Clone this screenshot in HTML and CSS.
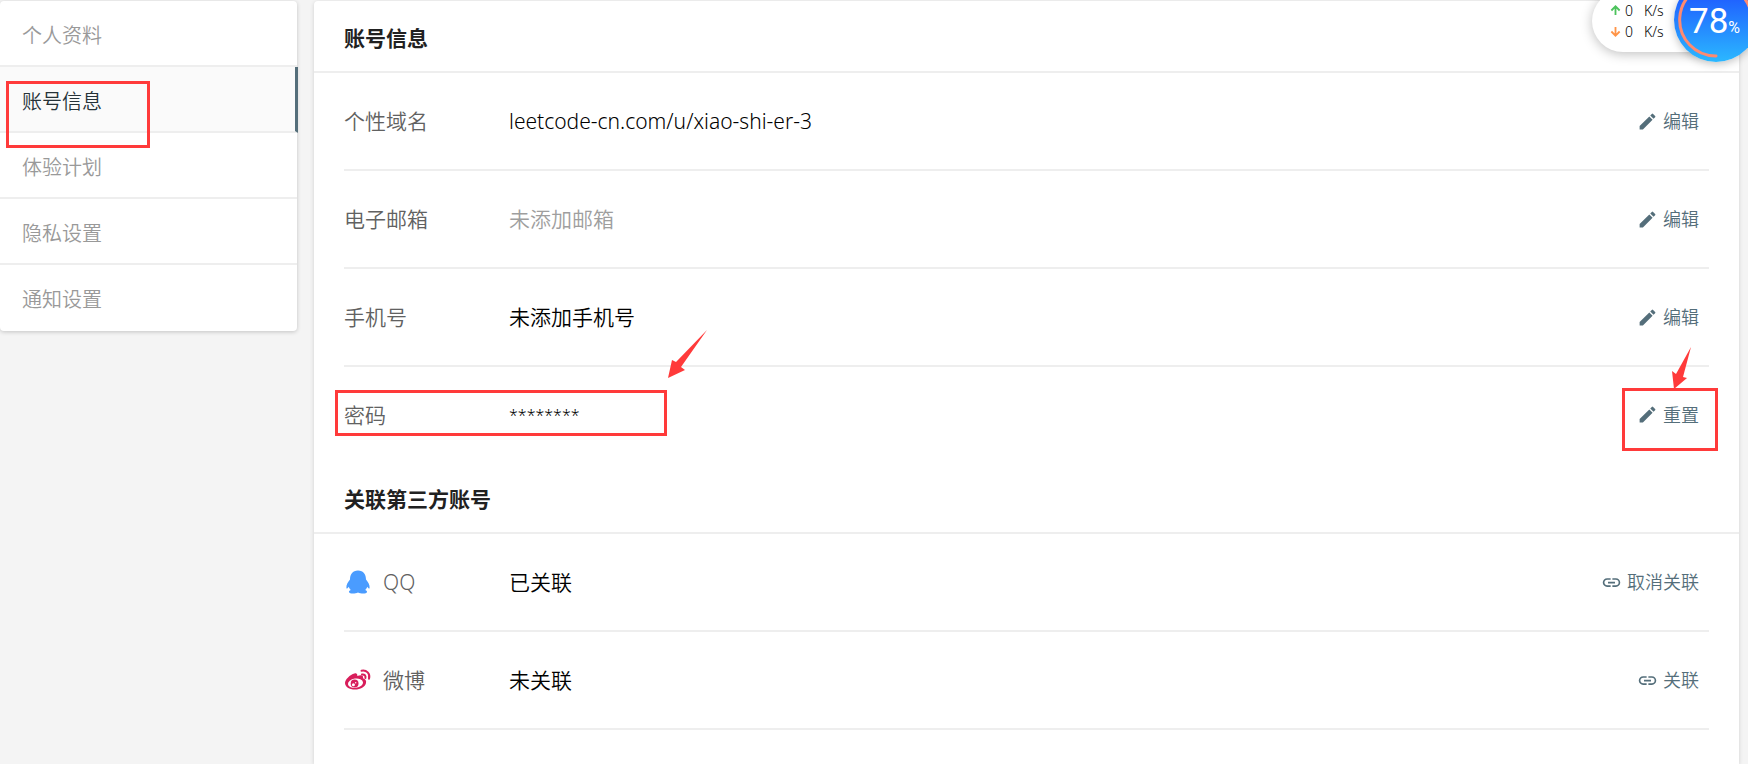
FILE: index.html
```html
<!DOCTYPE html>
<html lang="zh-CN">
<head>
  <meta charset="UTF-8">
  <title>账号信息</title>
  <link rel="stylesheet" href="styles.css">
</head>
<body>
  <!-- shared icons -->
  <svg class="sprite" aria-hidden="true">
    <symbol id="pencil" viewBox="0 0 24 24">
      <path d="M3 17.25V21h3.75L17.81 9.94l-3.75-3.75L3 17.25zM20.71 7.04a1 1 0 0 0 0-1.41l-2.34-2.34a1 1 0 0 0-1.41 0l-1.83 1.83 3.75 3.75 1.83-1.83z"/>
    </symbol>
    <symbol id="link" viewBox="0 0 24 24">
      <path d="M3.9 12c0-1.71 1.39-3.1 3.1-3.1h4V7H7a5 5 0 0 0 0 10h4v-1.9H7c-1.71 0-3.1-1.39-3.1-3.1zM8 13h8v-2H8v2zm9-6h-4v1.900h4a3.100 3.100 0 0 1 0 6.200h-4V17h4a5 5 0 0 0 0-10z"/>
    </symbol>
  </svg>

  <div class="page">
    <nav class="sidebar">
      <a class="menu-item" href="#">个人资料</a>
      <a class="menu-item active" href="#">账号信息</a>
      <a class="menu-item" href="#">体验计划</a>
      <a class="menu-item" href="#">隐私设置</a>
      <a class="menu-item" href="#">通知设置</a>
      <span class="mark mark-menu"></span>
    </nav>

    <main class="panel">
      <h2 class="panel-title">账号信息</h2>
      <div class="rows">
        <div class="row">
          <span class="label">个性域名</span>
          <span class="value">leetcode-cn.com/u/xiao-shi-er-3</span>
          <button type="button" class="action"><svg class="icon"><use href="#pencil"/></svg>编辑</button>
        </div>
        <div class="row">
          <span class="label">电子邮箱</span>
          <span class="value empty">未添加邮箱</span>
          <button type="button" class="action"><svg class="icon"><use href="#pencil"/></svg>编辑</button>
        </div>
        <div class="row">
          <span class="label">手机号</span>
          <span class="value">未添加手机号</span>
          <button type="button" class="action"><svg class="icon"><use href="#pencil"/></svg>编辑</button>
        </div>
        <div class="row last">
          <span class="label">密码</span>
          <span class="value password">********</span>
          <button type="button" class="action"><svg class="icon"><use href="#pencil"/></svg>重置</button>
          <span class="mark mark-password"></span>
          <svg class="arrow arrow-password" viewBox="0 0 40 50"><path d="M39 1 13 38l4 3L0 49l4-18 4 2z"/></svg>
          <span class="mark mark-reset"></span>
          <svg class="arrow arrow-reset" viewBox="0 0 20 44"><path d="M19 1 11 31l4 1L2 43 0 25l4 3z"/></svg>
        </div>
      </div>

      <h2 class="panel-title">关联第三方账号</h2>
      <div class="rows">
        <div class="row">
          <span class="label">
            <svg class="brand" viewBox="0 0 28 28" fill="#4a9cff">
              <path d="M14 2.500C8.500 2.500 6 6.500 6 11.500c-2 2.500-4 5.500-3.600 8.500.2 1.200 1.300.3 2.400-1.200.4 1.400 1 2.400 2 3.300-1.500.5-2 1.200-1.800 2C5.400 26 11 26 14 24.600c3 1.400 8.600 1.400 9-.5.2-.8-.3-1.500-1.800-2 1-.9 1.600-1.900 2-3.300 1.100 1.500 2.200 2.400 2.400 1.200.4-3-1.600-6-3.600-8.500C22 6.500 19.500 2.500 14 2.500z"/>
            </svg>
            QQ
          </span>
          <span class="value">已关联</span>
          <button type="button" class="action"><svg class="icon"><use href="#link"/></svg>取消关联</button>
        </div>
        <div class="row">
          <span class="label">
            <svg class="brand" viewBox="0 0 28 28">
              <path fill="#d81e5b" d="M10.500 7.500c1.800-.6 3 .3 2.800 2.500 3.500-1.400 6.500-1 5.700 2.300 2.300.8 3.600 2.200 3 4.700-.9 4-5.500 6.500-11 6.500-5.800 0-10-2.700-10-6.500 0-3.500 5-8.300 9.500-9.500z"/>
              <ellipse cx="11.500" cy="17.200" rx="7.600" ry="4.700" fill="#fff" transform="rotate(-8 11.500 17.200)"/>
              <circle cx="10.600" cy="17.500" r="3.900" fill="#d81e5b"/>
              <circle cx="9.400" cy="18.700" r="1.500" fill="#fff"/>
              <circle cx="11.700" cy="16.800" r=".7" fill="#fff"/>
              <path fill="none" stroke="#d81e5b" stroke-width="2" stroke-linecap="round" d="M17.500 4.700c5-1 9 2.800 7.500 8M18 8.500c2.500-.4 4 1.200 3.400 3.500"/>
            </svg>
            微博
          </span>
          <span class="value">未关联</span>
          <button type="button" class="action"><svg class="icon"><use href="#link"/></svg>关联</button>
        </div>
      </div>
    </main>
  </div>

  <!-- network speed floating widget -->
  <div class="monitor">
    <div class="speeds">
      <div class="speed">
        <svg class="dir up" viewBox="0 0 12 12"><path d="M6 11V2M1.500 6 6 1.500 10.500 6"/></svg>
        <span>0</span><span>K/s</span>
      </div>
      <div class="speed">
        <svg class="dir down" viewBox="0 0 12 12"><path d="M6 1v9M1.500 6 6 10.500 10.500 6"/></svg>
        <span>0</span><span>K/s</span>
      </div>
    </div>
    <div class="gauge">
      <svg class="ring" viewBox="0 0 84 84"><path d="M42 78A36 36 0 1 1 77 49"/></svg>
      <span class="percent">78<small>%</small></span>
    </div>
  </div>
</body>
</html>
```

FILE: styles.css
```css
* { box-sizing: border-box; }
body {
  margin: 0;
  background: #f4f4f4;
  color: #000;
  font-family: "Noto Sans", "Noto Sans CJK SC", sans-serif;
  font-size: 21px;
  font-weight: 350;
  line-height: 30px;
}
.sprite { display: none; }

.page {
  display: flex;
  gap: 17px;
  min-height: 100vh;
  padding: 1px 9px 0 0;
}

/* left menu */
.sidebar {
  position: relative;
  flex: 0 0 297px;
  align-self: flex-start;
  background: #fff;
  border-radius: 4px;
  box-shadow: 0 1px 4px rgba(0, 0, 0, 0.2);
}
.menu-item {
  display: flex;
  align-items: center;
  height: 66px;
  padding: 5px 22px 0;
  border-bottom: 2px solid #eee;
  color: #999;
  font-size: 20px;
  text-decoration: none;
}
.menu-item:nth-child(5) { border-bottom-color: transparent; }
.menu-item.active {
  margin-right: -1px;
  background: #fafafa;
  border-right: 3px solid #546e7a;
  color: #263238;
}

/* content */
.panel {
  flex: 1;
  min-width: 0;
  background: #fff;
  border-radius: 4px 4px 0 0;
  box-shadow: 0 1px 4px rgba(0, 0, 0, 0.15);
}
.panel-title {
  display: flex;
  align-items: center;
  height: 72px;
  margin: 0;
  padding: 3px 30px 0;
  border-bottom: 2px solid #eee;
  color: #212121;
  font-size: 21px;
  font-weight: 700;
}
.rows { padding: 0 30px; }
.row {
  position: relative;
  display: flex;
  align-items: center;
  height: 98px;
  border-bottom: 2px solid #eee;
}
.row.last { height: 95px; border-bottom: none; }
.label {
  display: flex;
  align-items: center;
  gap: 11px;
  width: 165px;
  color: #616161;
}
.value { flex: 1; }
.value.empty { color: #9e9e9e; }
.value.password { font-size: 16px; }
.brand { width: 28px; height: 28px; }
.action {
  display: flex;
  align-items: center;
  gap: 5px;
  padding: 0 10px;
  border: none;
  background: none;
  color: #546e7a;
  font: inherit;
  font-size: 18px;
  cursor: pointer;
}
.icon { width: 21px; height: 21px; fill: #546e7a; }

/* red highlights */
.mark {
  position: absolute;
  border: 3px solid #ff3a3a;
  pointer-events: none;
}
.mark-menu { left: 6px; top: 80px; width: 144px; height: 67px; }
.mark-password { left: -9px; top: 23px; width: 332px; height: 46px; }
.mark-reset { right: -9px; top: 21px; width: 96px; height: 63px; }
.arrow { position: absolute; fill: #ff3a3a; pointer-events: none; }
.arrow-password { left: 324px; top: -38px; width: 40px; height: 50px; }
.arrow-reset { right: 17px; top: -21px; width: 20px; height: 44px; }

/* floating widget */
.monitor {
  position: absolute;
  top: 0;
  right: 0;
  width: 180px;
  height: 90px;
  overflow: hidden;
}
.speeds {
  position: absolute;
  left: 24px;
  top: -10px;
  width: 130px;
  height: 62px;
  padding: 10px 18px;
  background: #fff;
  border-radius: 31px;
  box-shadow: 0 2px 12px rgba(0, 0, 0, 0.25);
}
.speed {
  display: flex;
  align-items: center;
  gap: 4px;
  height: 21px;
  font-size: 14px;
}
.speed span { width: 15px; }
.dir {
  width: 11px;
  height: 11px;
  fill: none;
  stroke-width: 2;
}
.up { stroke: #4cc35c; }
.down { stroke: #ff9447; }
.gauge {
  position: absolute;
  left: 106px;
  top: -22px;
  width: 84px;
  height: 84px;
  border-radius: 50%;
  background: linear-gradient(#1f5dff 20%, #2bb8ff);
  box-shadow: 0 2px 8px rgba(0, 0, 0, 0.25);
  color: #fff;
}
.ring {
  width: 84px;
  height: 84px;
  fill: none;
  stroke: #ff8a70;
  stroke-width: 3;
  stroke-linecap: round;
}
.percent {
  position: absolute;
  left: 15px;
  top: 29px;
  font-family: Roboto, sans-serif;
  font-size: 35px;
  font-weight: 400;
}
.percent small { font-size: 16px; }
```
